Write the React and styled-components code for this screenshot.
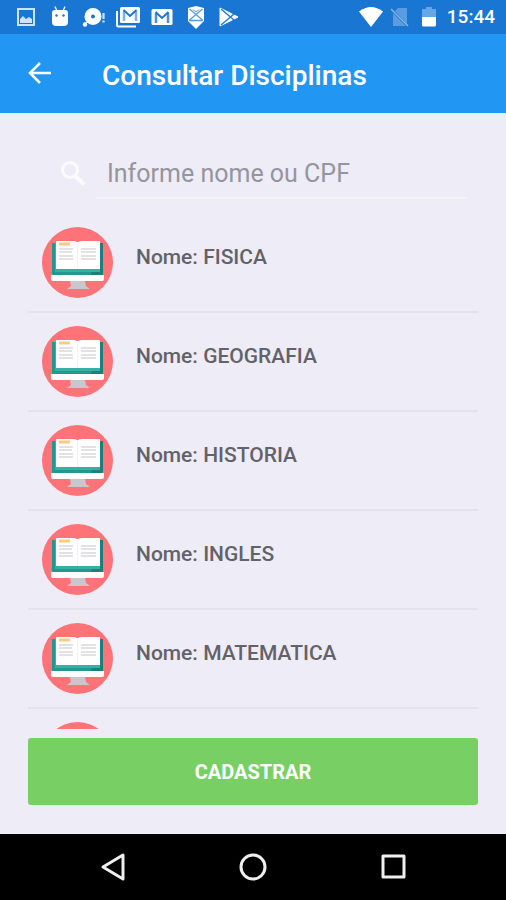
import { useState } from "react";
import styled, { createGlobalStyle } from "styled-components";

const DISCIPLINES = [
  { id: 1, name: "FISICA" },
  { id: 2, name: "GEOGRAFIA" },
  { id: 3, name: "HISTORIA" },
  { id: 4, name: "INGLES" },
  { id: 5, name: "MATEMATICA" },
  { id: 6, name: "" },
];

const GlobalStyle = createGlobalStyle`
  * {
    box-sizing: border-box;
  }
  body {
    margin: 0;
    background-color: #eeecf6;
    font-family: Roboto, "Liberation Sans", sans-serif;
  }
`;

const Screen = styled.div`
  height: 100vh;
  display: flex;
  flex-direction: column;
`;

const StatusBar = styled.div`
  flex: none;
  height: 34px;
  padding: 0 11px 0 14px;
  display: flex;
  align-items: center;
  justify-content: space-between;
  background-color: #1976d2;
  color: white;
`;

const StatusGroup = styled.div`
  display: flex;
  align-items: center;
  gap: ${(props) => props.$gap};
`;

const StatusIcon = styled.svg`
  display: block;
  width: 24px;
  height: 24px;
`;

const Clock = styled.time`
  padding-left: 1px;
  font-size: 19px;
  font-weight: 500;
  line-height: 24px;
`;

const Header = styled.header`
  flex: none;
  height: 79px;
  padding: 0 24px;
  display: flex;
  align-items: center;
  gap: 48px;
  background-color: #2196f3;
  color: white;
`;

const BackButton = styled.button`
  width: 30px;
  height: 30px;
  padding: 0;
  border: none;
  background: none;
  color: inherit;
  cursor: pointer;
`;

const Title = styled.h1`
  margin: 0;
  padding-top: 4px;
  font-size: 28px;
  font-weight: 500;
  line-height: 32px;
`;

const Main = styled.main`
  flex: 1;
  min-height: 0;
  padding: 36px 28px 29px;
  display: flex;
  flex-direction: column;
`;

const SearchBar = styled.label`
  flex: none;
  margin-bottom: 15px;
  padding: 0 11px 0 30px;
  display: flex;
  align-items: center;
  gap: 9px;
  color: #fbfaff;
`;

const SearchInput = styled.input`
  flex: 1;
  min-width: 0;
  height: 50px;
  padding: 0 11px;
  border: none;
  border-bottom: 2px solid #f5f4fb;
  outline: none;
  background: none;
  color: #5f5d66;
  font-family: inherit;
  font-size: 25px;

  &::placeholder {
    color: #96949c;
    opacity: 1;
  }
`;

const List = styled.ul`
  flex: 1;
  min-height: 0;
  margin: 0 0 9px;
  padding: 0;
  overflow-y: auto;
  scrollbar-width: none;
  list-style: none;
`;

const Row = styled.li`
  height: 99px;
  padding: 0 14px;
  display: flex;
  align-items: center;
  gap: 23px;
  border-bottom: 2px solid #e4e2ec;
`;

const Name = styled.span`
  padding-bottom: 12px;
  color: #636269;
  font-size: 21px;
  font-weight: 500;
  line-height: 24px;
`;

const SubmitButton = styled.button`
  flex: none;
  height: 67px;
  border: none;
  border-radius: 3px;
  background-color: #78d065;
  color: white;
  font-family: inherit;
  font-size: 20px;
  font-weight: 700;
  cursor: pointer;
`;

const NavBar = styled.nav`
  flex: none;
  height: 66px;
  padding: 0 97px;
  display: flex;
  align-items: center;
  justify-content: space-between;
  background-color: black;
`;

const NavButton = styled.button`
  width: 32px;
  height: 32px;
  padding: 0;
  border: none;
  background: none;
  cursor: pointer;
`;

const NavIcon = styled.svg`
  display: block;
  fill: none;
  stroke: #efefef;
  stroke-width: 3;
  stroke-linejoin: round;
`;

const Notifications = () => (
  <StatusGroup $gap="10px">
    <StatusIcon viewBox="0 0 24 24" opacity="0.8">
      <rect x="4" y="4" width="16" height="16" fill="none" stroke="#fff" strokeWidth="2" />
      <path d="M6 18v-4l3-3 3 3 3-2 3 2v4z" fill="#fff" />
    </StatusIcon>
    <StatusIcon viewBox="0 0 24 24">
      <path d="M7 1.500l2 4.500M17 1.500l-2 4.500" stroke="#fff" strokeWidth="1.300" />
      <path d="M4 8q0-3 3-3h10q3 0 3 3v9q0 4-4 4H8q-4 0-4-4z" fill="#fff" />
      <circle cx="8.500" cy="10.500" r="1.200" fill="#1976d2" />
      <circle cx="15.500" cy="10.500" r="1.200" fill="#1976d2" />
    </StatusIcon>
    <StatusIcon viewBox="0 0 24 24">
      <circle cx="11" cy="11.500" r="8.500" fill="#fff" />
      <circle cx="11" cy="11.500" r="2" fill="#1976d2" />
      <circle cx="3" cy="19.500" r="2.200" fill="#fff" />
      <path d="M4 18l3-2" stroke="#fff" strokeWidth="1.500" />
      <path d="M21.500 8v6M21.500 15.500v2" stroke="#fff" strokeWidth="2.200" opacity="0.8" />
    </StatusIcon>
    <StatusIcon viewBox="0 0 24 24">
      <path d="M1 6v14q0 1.500 1.500 1.500H20" fill="none" stroke="#fff" strokeWidth="2" />
      <rect x="4" y="2" width="20" height="16" rx="1.500" fill="#fff" />
      <path d="M8 16V6M20 16V6" stroke="#84aee2" strokeWidth="2.500" />
      <path d="M7.500 5l6.500 6 6.500-6" fill="none" stroke="#1976d2" strokeWidth="2" />
    </StatusIcon>
    <StatusIcon viewBox="0 0 24 24">
      <rect x="1.500" y="4" width="21" height="16" rx="1.500" fill="#fff" />
      <path d="M6 18V8M18 18V8" stroke="#4f8ed8" strokeWidth="2.500" />
      <path d="M5.500 7l6.500 6 6.500-6" fill="none" stroke="#1976d2" strokeWidth="2" />
    </StatusIcon>
    <StatusIcon viewBox="0 0 24 24">
      <path d="M4 3l8-2 8 2v13l-8 8-8-8z" fill="#fff" />
      <path d="M5.500 4l13 11M18.500 4l-13 11M5 15.500h14" stroke="#5d99de" strokeWidth="1.300" />
      <path d="M9 4.500q3 4 6 0" fill="none" stroke="#5d99de" />
    </StatusIcon>
    <StatusIcon viewBox="0 0 24 24">
      <path d="M2 3l18 9L2 21z" fill="#fff" stroke="#fff" strokeLinejoin="round" />
      <path d="M3 4l13 11M3 20l13-11" stroke="#1976d2" strokeWidth="1.300" />
    </StatusIcon>
  </StatusGroup>
);

const DeviceStatus = () => (
  <StatusGroup $gap="5px">
    <StatusIcon viewBox="0 0 24 24">
      <path d="M0 6.500Q12-2.500 24 6.500L12 22z" fill="#fff" />
    </StatusIcon>
    <StatusIcon viewBox="0 0 24 24">
      <path d="M10 3h9v16L7 6zM5 8l13 13H5z" fill="#5b9ce0" />
      <path d="M3 4l17 17" stroke="#8ab7e8" strokeWidth="1.500" />
    </StatusIcon>
    <StatusIcon viewBox="0 0 24 24">
      <path d="M5 4h4V2h6v2h4v8H5z" fill="#68a5e4" />
      <path d="M5 12h14v8q0 1.500-1.500 1.500h-11Q5 21.500 5 20z" fill="#fff" />
    </StatusIcon>
    <Clock>15:44</Clock>
  </StatusGroup>
);

const ComputerIcon = () => (
  <svg width="71" height="71" viewBox="0 0 71 71" aria-hidden="true">
    <circle cx="35.500" cy="35.500" r="35.500" fill="#fd7378" />
    <path d="M10 16h51v32H10z" fill="#23988f" />
    <path d="M58 16h3v32H49z" fill="#1c7f79" />
    <path d="M13 16h45v29H13z" fill="#35b1a3" />
    <path d="M14 14h17q4 0 4.500 2Q36 14 40 14h18v28H14z" fill="#fff" />
    <path d="M35.500 15v27" stroke="#f3f2f5" />
    <path d="M17 17h11" stroke="#f8cd83" strokeWidth="3" />
    <path
      d="M17 22h14M17 25h13M17 29h14M17 32h14M39 22h15M39 25h15M39 29h15M39 32h15"
      stroke="#d9d9dc"
      strokeWidth="1.500"
    />
    <path d="M9 48h53v4q0 2-2 2H11q-2 0-2-2z" fill="#fff" />
    <path d="M28 54h15l1 5 4 3H25l4-3z" fill="#c9c7cc" />
  </svg>
);

const App = () => {
  const [search, setSearch] = useState("");
  const rows = DISCIPLINES.filter((item) =>
    item.name.includes(search.toUpperCase())
  );

  return (
    <>
      <GlobalStyle />
      <Screen>
        <StatusBar>
          <Notifications />
          <DeviceStatus />
        </StatusBar>
        <Header>
          <BackButton type="button" aria-label="Voltar">
            <svg
              width="30"
              height="30"
              viewBox="0 0 30 30"
              fill="none"
              stroke="currentColor"
              strokeWidth="2.500"
            >
              <path d="M27 14H6M16 4L6 14l10 10" />
            </svg>
          </BackButton>
          <Title>Consultar Disciplinas</Title>
        </Header>
        <Main>
          <SearchBar>
            <svg
              width="29"
              height="29"
              viewBox="0 0 29 29"
              fill="none"
              stroke="currentColor"
              strokeWidth="3"
              aria-hidden="true"
            >
              <circle cx="12" cy="10" r="7.500" />
              <path d="M17 15.500l9 9" strokeWidth="4" />
            </svg>
            <SearchInput
              type="text"
              name="search"
              aria-label="Informe nome ou CPF"
              placeholder="Informe nome ou CPF"
              value={search}
              onChange={(e) => setSearch(e.target.value)}
            />
          </SearchBar>
          <List>
            {rows.map((item) => (
              <Row key={item.id}>
                <ComputerIcon />
                {item.name ? <Name>Nome: {item.name}</Name> : null}
              </Row>
            ))}
          </List>
          <SubmitButton type="button">CADASTRAR</SubmitButton>
        </Main>
        <NavBar>
          <NavButton type="button" aria-label="Voltar">
            <NavIcon width="32" height="32" viewBox="0 0 32 32">
              <path d="M26 4v24L6 16z" />
            </NavIcon>
          </NavButton>
          <NavButton type="button" aria-label="Inicio">
            <NavIcon width="32" height="32" viewBox="0 0 32 32">
              <circle cx="16" cy="16" r="12" />
            </NavIcon>
          </NavButton>
          <NavButton type="button" aria-label="Recentes">
            <NavIcon width="32" height="32" viewBox="0 0 32 32">
              <rect x="6" y="5" width="21" height="21" />
            </NavIcon>
          </NavButton>
        </NavBar>
      </Screen>
    </>
  );
};

export default App;
